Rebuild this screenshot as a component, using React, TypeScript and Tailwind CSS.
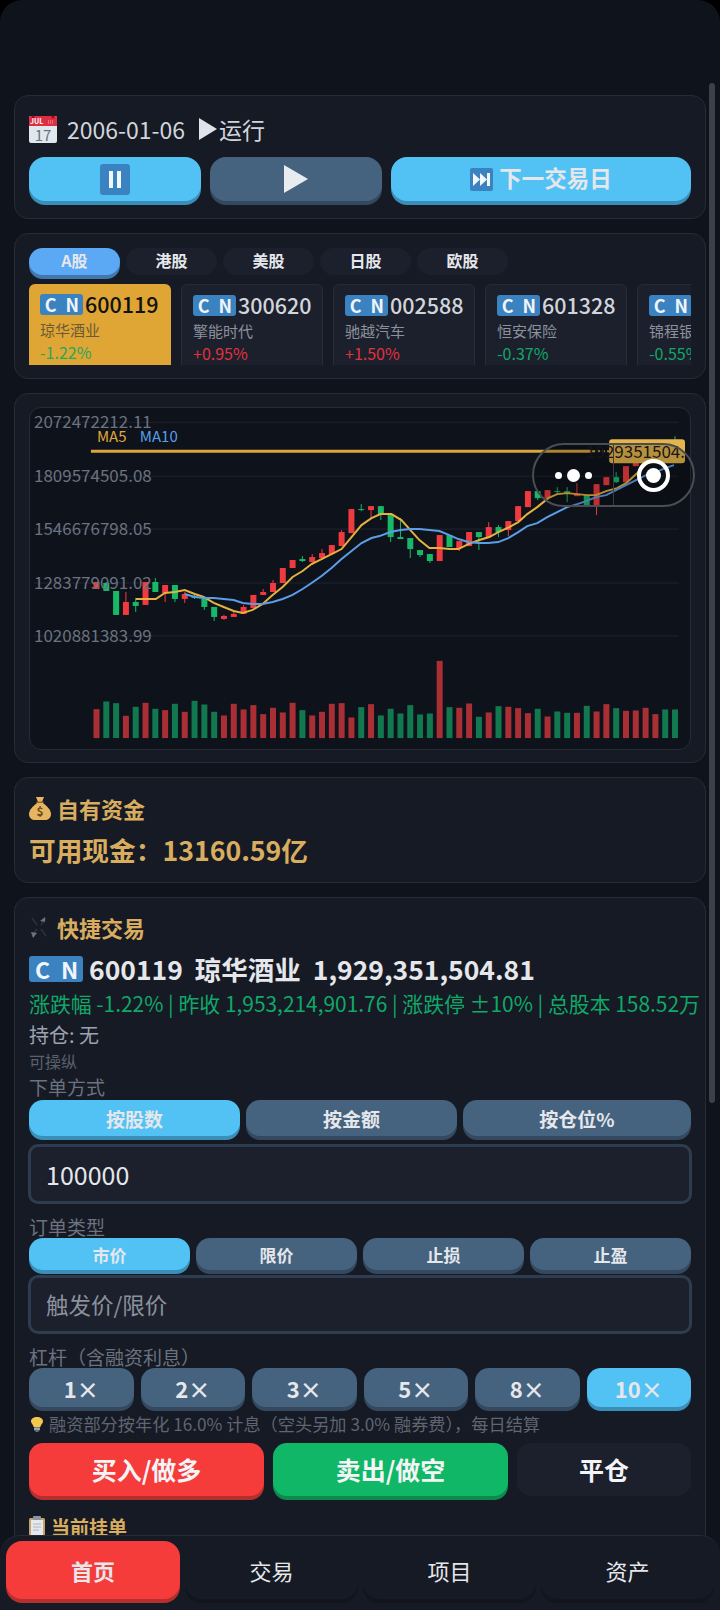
import React from 'react';

const FONT = "font-['Noto_Sans_CJK_SC','Noto_Sans',sans-serif]";

type Candle = [number, number, number, number, 'r' | 'g'];

// body top, body bottom, wick top, wick bottom
const candles: Candle[] = [
  [582, 589, 582, 589, 'r'], [583, 591, 582, 591, 'g'], [591, 615, 591, 615, 'g'], [602, 615, 592, 615, 'r'],
  [602, 606, 598, 612, 'g'], [582, 605, 582, 605, 'r'], [582, 592, 578, 592, 'g'], [585, 593, 585, 602, 'r'],
  [585, 599, 585, 602, 'g'], [594, 599, 592, 603, 'r'], [596, 598, 595, 599, 'g'], [597, 607, 597, 610, 'g'],
  [607, 617, 607, 621, 'g'], [616, 619, 615, 620, 'r'], [614, 617, 612, 617, 'r'], [607, 614, 605, 614, 'r'],
  [595, 608, 595, 608, 'r'], [592, 595, 589, 595, 'r'], [583, 592, 580, 592, 'r'], [568, 583, 568, 583, 'r'],
  [560, 568, 560, 568, 'r'], [559, 561, 556, 562, 'g'], [557, 562, 554, 565, 'r'], [553, 558, 549, 560, 'r'],
  [545, 554, 545, 554, 'r'], [532, 546, 530, 546, 'r'], [509, 533, 509, 533, 'r'], [509, 510, 504, 511, 'g'],
  [506, 510, 506, 519, 'r'], [506, 514, 506, 520, 'g'], [514, 537, 513, 542, 'g'], [537, 539, 518, 539, 'g'],
  [538, 549, 538, 558, 'g'], [550, 555, 550, 557, 'g'], [554, 561, 554, 563, 'g'], [535, 561, 535, 561, 'r'],
  [535, 547, 535, 547, 'g'], [541, 548, 541, 551, 'r'], [532, 546, 532, 546, 'r'], [532, 537, 532, 550, 'g'],
  [527, 537, 522, 537, 'r'], [527, 532, 525, 537, 'g'], [521, 530, 521, 536, 'r'], [506, 521, 506, 521, 'r'],
  [491, 507, 491, 507, 'r'], [491, 498, 491, 500, 'g'], [490, 498, 490, 498, 'r'], [491, 492, 487, 494, 'g'],
  [491, 493, 487, 502, 'g'], [494, 496, 483, 496, 'r'], [495, 506, 495, 506, 'g'], [484, 506, 484, 515, 'r'],
  [477, 485, 477, 485, 'r'], [477, 482, 472, 483, 'g'], [466, 482, 466, 482, 'r'], [462, 466, 460, 466, 'r'],
  [455, 462, 452, 462, 'r'], [448, 455, 446, 455, 'r'], [444, 448, 442, 450, 'r'], [440, 445, 436, 446, 'g'],
];

const volumes: [number, 'r' | 'g'][] = [
  [178, 'r'], [155, 'g'], [160, 'g'], [198, 'r'], [171, 'g'], [159, 'r'], [177, 'g'], [181, 'r'], [162, 'g'], [186, 'r'],
  [153, 'g'], [164, 'g'], [186, 'g'], [197, 'r'], [162, 'r'], [179, 'r'], [166, 'r'], [193, 'r'], [174, 'r'], [188, 'r'],
  [159, 'r'], [181, 'g'], [197, 'r'], [186, 'r'], [162, 'r'], [160, 'r'], [203, 'r'], [172, 'g'], [163, 'r'], [197, 'g'],
  [177, 'g'], [191, 'g'], [166, 'g'], [194, 'g'], [191, 'g'], [33, 'r'], [172, 'g'], [174, 'r'], [161, 'r'], [201, 'g'],
  [188, 'r'], [169, 'g'], [171, 'r'], [175, 'r'], [190, 'r'], [177, 'g'], [200, 'r'], [185, 'g'], [189, 'g'], [189, 'r'],
  [168, 'g'], [185, 'r'], [163, 'r'], [175, 'g'], [183, 'r'], [182, 'r'], [174, 'r'], [193, 'r'], [179, 'g'], [179, 'g'],
];

const ma5 =
  '136,599 156,599 165,593 175,592 185,590 195,594 204,597 214,603 224,607 234,611 243,613 253,610 263,604 273,595 283,587 293,577 303,571 312,564 322,559 332,554 342,549 352,537 362,525 372,518 381,514 392,514 402,520 411,530 420,540 430,548 440,548 450,549 459,549 469,544 480,540 490,537 499,532 510,527 519,522 528,514 538,507 549,498 558,494 568,493 578,494 588,495 597,495 607,491 618,488 627,483 638,473 648,463 655,458';
const ma10 =
  '185,594 195,597 204,598 214,598 224,599 234,600 243,603 253,604 263,604 273,602 283,599 293,595 303,589 312,583 322,576 332,568 342,559 352,551 362,543 372,538 380,536 391,532 401,530 411,529 420,529 430,530 440,531 450,535 459,539 469,542 479,543 489,543 499,542 509,538 519,532 528,526 538,523 548,517 558,512 568,507 578,504 587,501 597,497 607,495 617,490 627,485 637,480 647,475 657,472 666,468 675,465';

const grid = [
  { y: 422, label: '2072472212.11' },
  { y: 476, label: '1809574505.08' },
  { y: 529, label: '1546676798.05' },
  { y: 583, label: '1283779091.02' },
  { y: 636, label: '1020881383.99' },
];

const stocks = [
  { code: '600119', name: '琼华酒业', pct: '-1.22%', up: false, active: true },
  { code: '300620', name: '擎能时代', pct: '+0.95%', up: true },
  { code: '002588', name: '驰越汽车', pct: '+1.50%', up: true },
  { code: '601328', name: '恒安保险', pct: '-0.37%', up: false },
  { code: '688001', name: '锦程银行', pct: '-0.55%', up: false },
];

function Flag({ large }: { large?: boolean }) {
  const tile = large
    ? 'w-[27px] h-[26px] text-[23px]'
    : 'w-[21.5px] h-[21px] text-[18px]';
  return (
    <span className="inline-flex shrink-0 rounded-[3px] overflow-hidden bg-[#3a82c0]">
      <span className={`${tile} flex items-center justify-center font-bold text-[#f1f5f9] leading-none`}>C</span>
      <span className={`${tile} flex items-center justify-center font-bold text-[#f1f5f9] leading-none`}>N</span>
    </span>
  );
}

function Btn({
  active,
  className,
  children,
}: {
  active?: boolean;
  className?: string;
  children: React.ReactNode;
}) {
  const tone = active
    ? 'bg-[#52c2f5] shadow-[0_4px_0_#3a8fb8]'
    : 'bg-[#45637f] shadow-[0_4px_0_#34495f]';
  return (
    <div className={`flex items-center justify-center font-bold text-[#e5e7eb] ${tone} ${className ?? ''}`}>
      {children}
    </div>
  );
}

function CalendarIcon() {
  return (
    <svg width="28" height="28" viewBox="0 0 28 28" className="shrink-0">
      <rect x="0" y="1" width="28" height="27" rx="2" fill="#e1e8ed" />
      <path d="M0 3a2 2 0 0 1 2-2h24a2 2 0 0 1 2 2v8H0z" fill="#dd2e44" />
      <circle cx="4" cy="2" r="1.5" fill="#a0041e" />
      <circle cx="24" cy="2" r="1.5" fill="#a0041e" />
      <text x="1" y="9" fontSize="7" fontWeight="700" fill="#fff">JUL</text>
      <path d="M19 6h6M19 8h6" stroke="#f4abba" strokeWidth="1" strokeDasharray="1 1" />
      <text x="14" y="25.5" fontSize="15" textAnchor="middle" fill="#66757f">17</text>
    </svg>
  );
}

function MoneyBag() {
  return (
    <svg width="22" height="24" viewBox="0 0 22 24" className="shrink-0">
      <path d="M7 1h8l-2 5H9z" fill="#e5b562" />
      <path d="M8 7h6c4 3 8 7 8 11 0 4-3 6-6 6H6c-3 0-6-2-6-6 0-4 4-8 8-11z" fill="#e5b562" />
      <rect x="7.5" y="5.5" width="7" height="1.5" fill="#8f6b2c" />
      <text x="11" y="20" fontSize="12" fontWeight="700" textAnchor="middle" fill="#6a4a16">$</text>
    </svg>
  );
}

function Swords() {
  return (
    <svg width="20" height="24" viewBox="0 0 20 24" className="shrink-0" fill="none">
      <path d="M3 3l5 7M17 3l-5 7M3 21l5-7M17 21l-5-7" stroke="#2d323d" strokeWidth="1.5" />
      <path d="M11 6l5-4v5z" fill="#6b7280" />
      <path d="M2 17l6 1-4 5z" fill="#6b7280" />
    </svg>
  );
}

function Clipboard() {
  return (
    <svg width="16" height="21" viewBox="0 0 16 21" className="shrink-0">
      <rect x="0" y="2" width="16" height="19" rx="1.5" fill="#c9a06a" />
      <rect x="2" y="4" width="12" height="15" fill="#e6e9ec" />
      <rect x="4" y="0" width="8" height="4" rx="1" fill="#8b95a1" />
      <path d="M4 8h8M4 11h8M4 14h6" stroke="#aab4be" strokeWidth="1" />
    </svg>
  );
}

function Bulb() {
  return (
    <svg width="12" height="15" viewBox="0 0 12 21" className="shrink-0 ml-[2px]" preserveAspectRatio="none">
      <path d="M6 0c3.4 0 6 2.6 6 5.8 0 3-2.2 4.4-2.6 8.2H2.6C2.2 10.2 0 8.8 0 5.8 0 2.6 2.6 0 6 0z" fill="#f2c94c" />
      <rect x="3" y="14.5" width="6" height="4.5" rx="1" fill="#9aa5b1" />
      <rect x="4.5" y="19" width="3" height="2" fill="#6b7280" />
    </svg>
  );
}

function Chart() {
  return (
    <svg viewBox="30 408 661 341" className="block w-full h-full">
      {grid.map((g) => (
        <line key={g.y} x1="34" x2="680" y1={g.y} y2={g.y} stroke="#1f2430" strokeWidth="1" />
      ))}
      {volumes.map(([top, c], i) => (
        <rect
          key={i}
          x={93.6 + 9.82 * i}
          y={650 + top / 3}
          width="6"
          height={(265 - top) / 3}
          fill={c === 'r' ? '#a92f35' : '#12784f'}
        />
      ))}
      {candles.map(([t, b, wt, wb, c], i) => {
        const x = 96.6 + 9.82 * i;
        const fill = c === 'r' ? '#ef3b3f' : '#17b968';
        return (
          <g key={i}>
            <line x1={x} x2={x} y1={wt} y2={wb} stroke={fill} strokeWidth="1" />
            <rect x={x - 3} y={t} width="6" height={b - t} fill={fill} />
          </g>
        );
      })}
      <polyline points={ma5} fill="none" stroke="#e5b13f" strokeWidth="2" />
      <polyline points={ma10} fill="none" stroke="#5b9ee8" strokeWidth="2" />
      {grid.map((g) => (
        <text key={g.label} x="34" y={g.y + 6} fontSize="17" fill="#6b7280">
          {g.label}
        </text>
      ))}
      <text x="97" y="442" fontSize="15" fill="#e0a93a">MA5</text>
      <text x="140" y="442" fontSize="15" fill="#5b9ee8">MA10</text>
      <line x1="91" x2="593" y1="451" y2="451" stroke="#d9a53c" strokeWidth="3" />
      <line x1="593" x2="610" y1="451" y2="451" stroke="#d9a53c" strokeWidth="2" strokeDasharray="3 2" />
      <rect x="610" y="439" width="76" height="24" rx="3" fill="#e5b44a" />
      <text x="686" y="458" fontSize="17" textAnchor="end" fill="#1b1c20">1929351504.</text>
    </svg>
  );
}

export default function App() {
  return (
    <div className={`${FONT} relative w-[720px] h-[1610px] overflow-hidden bg-black`}>
      <div className="h-full rounded-t-[22px] bg-[#0f131c] px-[14px] pt-[95px] flex flex-col gap-[14px] overflow-hidden">
        {/* 日期和控制 */}
        <section className="h-[124px] shrink-0 rounded-[14px] border border-[#262b37] bg-[#161a24] px-[14px]">
          <div className="mt-[18px] h-[30px] flex items-center gap-[10px] text-[23px] leading-none text-[#d1d5db]">
            <CalendarIcon />
            <span>2006-01-06</span>
            <span className="flex items-center ml-[3px]">
              <svg width="20" height="22" viewBox="0 0 18 22" className="mr-[1px]">
                <path d="M0 0l18 11L0 22z" fill="#dfe3ea" />
              </svg>
              <span>运行</span>
            </span>
          </div>
          <div className="mt-[13px] flex gap-[9px]">
            <Btn active className="w-[172px] h-[44px] rounded-[16px]">
              <svg width="30" height="31" viewBox="0 0 30 31">
                <rect width="30" height="31" rx="3" fill="#3a82c0" />
                <rect x="9" y="7" width="4" height="17" fill="#f4f7fa" />
                <rect x="17" y="7" width="4" height="17" fill="#f4f7fa" />
              </svg>
            </Btn>
            <Btn className="w-[172px] h-[44px] rounded-[16px]">
              <svg width="24" height="28" viewBox="0 0 24 28">
                <path d="M0 0l24 14L0 28z" fill="#e8ebf0" />
              </svg>
            </Btn>
            <Btn active className="flex-1 h-[44px] rounded-[16px] text-[22.5px] gap-[6px]">
              <svg width="23" height="23" viewBox="0 0 23 23">
                <rect width="23" height="23" rx="2" fill="#3a82c0" />
                <path d="M3 5l7 6.5-7 6.5zM10 5l7 6.5-7 6.5z" fill="#f4f7fa" />
                <rect x="17" y="5" width="3" height="13" fill="#f4f7fa" />
              </svg>
              <span className="pb-[2px]">下一交易日</span>
            </Btn>
          </div>
        </section>

        {/* 市场和股票 */}
        <section className="h-[146px] shrink-0 rounded-[14px] border border-[#262b37] bg-[#161a24] px-[14px] pt-[14px]">
          <div className="flex gap-[6px] text-[16px] font-bold text-[#e5e7eb] leading-none">
            <div className="w-[91px] h-[27px] flex items-center justify-center rounded-full bg-[#5ba8f5] shadow-[0_4px_0_#4277ad] pb-[3px]">A股</div>
            {['港股', '美股', '日股', '欧股'].map((m) => (
              <div key={m} className="w-[91px] h-[27px] flex items-center justify-center rounded-full bg-[#1c202c] pb-[3px]">
                {m}
              </div>
            ))}
          </div>
          <div className="mt-[9px] h-[81px] flex gap-[10.5px] overflow-hidden">
            {stocks.map((s) => (
              <div
                key={s.code}
                className={`w-[141.5px] h-[96px] shrink-0 rounded-[6px] pl-[11px] pt-[9px] ${
                  s.active ? 'bg-[#dfa535]' : 'bg-[#1c202c] border border-[#262b37]'
                }`}
              >
                <div className={`flex items-center gap-[2px] h-[22px] text-[21.5px] font-medium leading-none ${s.active ? 'text-[#111111]' : 'text-[#d1d5db]'}`}>
                  <Flag />
                  <span>{s.code}</span>
                </div>
                <div className={`mt-[3px] h-[22px] flex items-center text-[15px] leading-none whitespace-nowrap ${s.active ? 'text-[#6b5a35]' : 'text-[#8b919d]'}`}>
                  {s.name}
                </div>
                <div className={`mt-[1px] h-[22px] flex items-center text-[16px] leading-none ${s.up ? 'text-[#e0323c]' : s.active ? 'text-[#27a85f]' : 'text-[#10a868]'}`}>
                  {s.pct}
                </div>
              </div>
            ))}
          </div>
        </section>

        {/* K线 */}
        <section className="h-[370px] shrink-0 rounded-[14px] border border-[#262b37] bg-[#161a24] px-[14px] pt-[13px]">
          <div className="h-[343px] rounded-[12px] border border-[#262b37] bg-[#0e121b] overflow-hidden">
            <Chart />
          </div>
        </section>

        {/* 资金 */}
        <section className="h-[106px] shrink-0 rounded-[14px] border border-[#262b37] bg-[#161a24] px-[14px]">
          <div className="mt-[15px] h-[30px] flex items-center gap-[6px] text-[22px] font-bold leading-none text-[#d9ad5f]">
            <MoneyBag />
            <span>自有资金</span>
          </div>
          <div className="mt-[9px] h-[36px] flex items-center text-[26.7px] font-bold leading-none text-[#d9ad5f]">
            可用现金：13160.59亿
          </div>
        </section>

        {/* 快捷交易 */}
        <section className="shrink-0 rounded-t-[14px] border border-[#262b37] bg-[#161a24] px-[14px] h-[760px]">
          <div className="mt-[14px] h-[30px] flex items-center gap-[8px] text-[22px] font-bold leading-none text-[#d9ad5f]">
            <Swords />
            <span>快捷交易</span>
          </div>
          <div className="mt-[12px] h-[30px] flex items-center gap-[6px] text-[26.5px] font-bold leading-none text-[#e5e7eb] whitespace-nowrap">
            <Flag large />
            <span>600119</span>
            <span className="ml-[6px]">琼华酒业</span>
            <span className="ml-[6px]">1,929,351,504.81</span>
          </div>
          <div className="mt-[6px] h-[26px] flex items-center text-[20.9px] leading-none text-[#10a868] whitespace-nowrap">
            涨跌幅 -1.22% | 昨收 1,953,214,901.76 | 涨跌停 ±10% | 总股本 158.52万
          </div>
          <div className="mt-[4px] h-[30px] flex items-center text-[20px] leading-none text-[#9ca3af]">持仓: 无</div>
          <div className="h-[22px] flex items-center text-[16px] leading-none text-[#5a606c]">可操纵</div>
          <div className="mt-[2px] h-[26px] flex items-center text-[19px] leading-none text-[#6b7280] pb-[2px]">下单方式</div>
          <div className="flex gap-[6px] text-[19px] leading-none">
            <Btn active className="w-[211px] h-[36px] rounded-[14px]">按股数</Btn>
            <Btn className="w-[211px] h-[36px] rounded-[14px]">按金额</Btn>
            <Btn className="flex-1 h-[36px] rounded-[14px]">按仓位%</Btn>
          </div>
          <div className="mt-[8px] -mx-[1px] h-[60px] flex items-center rounded-[10px] border-[3px] border-[#2d3d4f] bg-[#1c202c] pl-[15px] text-[25px] leading-none text-[#e5e7eb]">
            100000
          </div>
          <div className="mt-[10px] h-[24px] flex items-center text-[19px] leading-none text-[#6b7280]">订单类型</div>
          <div className="flex gap-[6px] text-[17px] leading-none">
            <Btn active className="flex-1 h-[32px] rounded-[14px]">市价</Btn>
            <Btn className="flex-1 h-[32px] rounded-[14px]">限价</Btn>
            <Btn className="flex-1 h-[32px] rounded-[14px]">止损</Btn>
            <Btn className="flex-1 h-[32px] rounded-[14px]">止盈</Btn>
          </div>
          <div className="mt-[5px] -mx-[1px] h-[59px] flex items-center rounded-[10px] border-[3px] border-[#2d3d4f] bg-[#1c202c] pl-[15px] text-[22.5px] leading-none text-[#8b919d]">
            触发价/限价
          </div>
          <div className="mt-[10px] h-[24px] flex items-center text-[19px] leading-none text-[#6b7280]">杠杆（含融资利息）</div>
          <div className="flex gap-[7px] text-[22px] leading-none">
            {['1×', '2×', '3×', '5×', '8×'].map((l) => (
              <Btn key={l} className="flex-1 h-[39px] rounded-[14px]">{l}</Btn>
            ))}
            <Btn active className="flex-1 h-[39px] rounded-[14px]">10×</Btn>
          </div>
          <div className="mt-[6px] h-[22px] flex items-center gap-[6px] text-[17.2px] leading-none text-[#5f6572] whitespace-nowrap">
            <Bulb />
            <span>融资部分按年化 16.0% 计息（空头另加 3.0% 融券费），每日结算</span>
          </div>
          <div className="mt-[8px] flex gap-[9px] text-[25px] font-bold leading-none text-[#f3f4f6]">
            <div className="w-[235px] h-[53px] flex items-center justify-center rounded-[14px] bg-[#f63b3b] shadow-[0_4px_0_#b52f2f]">买入/做多</div>
            <div className="w-[235px] h-[53px] flex items-center justify-center rounded-[14px] bg-[#10b767] shadow-[0_4px_0_#0c8a4e]">卖出/做空</div>
            <div className="flex-1 h-[53px] flex items-center justify-center rounded-[14px] bg-[#1c202c]">平仓</div>
          </div>
          <div className="mt-[17px] h-[26px] flex items-center gap-[6px] text-[19px] font-bold leading-none text-[#d9ad5f]">
            <Clipboard />
            <span>当前挂单</span>
          </div>
        </section>
      </div>

      {/* 滚动条 */}
      <div className="absolute left-[709px] top-[83px] w-[6px] h-[1020px] rounded-full bg-[#3b404a]" />

      {/* 小程序胶囊 */}
      <div className="absolute left-[532px] top-[443px] w-[163px] h-[64px] flex items-center rounded-full border-[2px] border-[#4a4d54] bg-black/20">
        <div className="w-[79px] h-full flex items-center justify-center gap-[5px]">
          <span className="w-[7px] h-[7px] rounded-full bg-white" />
          <span className="w-[13px] h-[13px] rounded-full bg-white" />
          <span className="w-[7px] h-[7px] rounded-full bg-white" />
        </div>
        <div className="w-px h-full bg-[#3a3d44]" />
        <div className="flex-1 flex items-center justify-center pr-[1px]">
          <span className="w-[33px] h-[33px] flex items-center justify-center rounded-full border-[4px] border-white">
            <span className="w-[15px] h-[15px] rounded-full bg-white" />
          </span>
        </div>
      </div>

      {/* 底部导航 */}
      <nav className="absolute left-0 right-0 top-[1535px] bottom-0 rounded-t-[20px] border-t border-[#262b37] bg-[#161a24] px-[6px] pt-[5px] flex gap-[5px] text-[22px] leading-none text-[#e5e7eb]">
        <div className="w-[174px] h-[58px] flex items-center justify-center rounded-[16px] bg-[#f63b3b] shadow-[0_4px_0_#b52f2f] font-bold">首页</div>
        {['交易', '项目', '资产'].map((t) => (
          <div key={t} className="w-[173px] h-[58px] flex items-center justify-center rounded-[16px] bg-[#161a24] shadow-[0_4px_0_#12151d]">
            {t}
          </div>
        ))}
      </nav>
    </div>
  );
}
